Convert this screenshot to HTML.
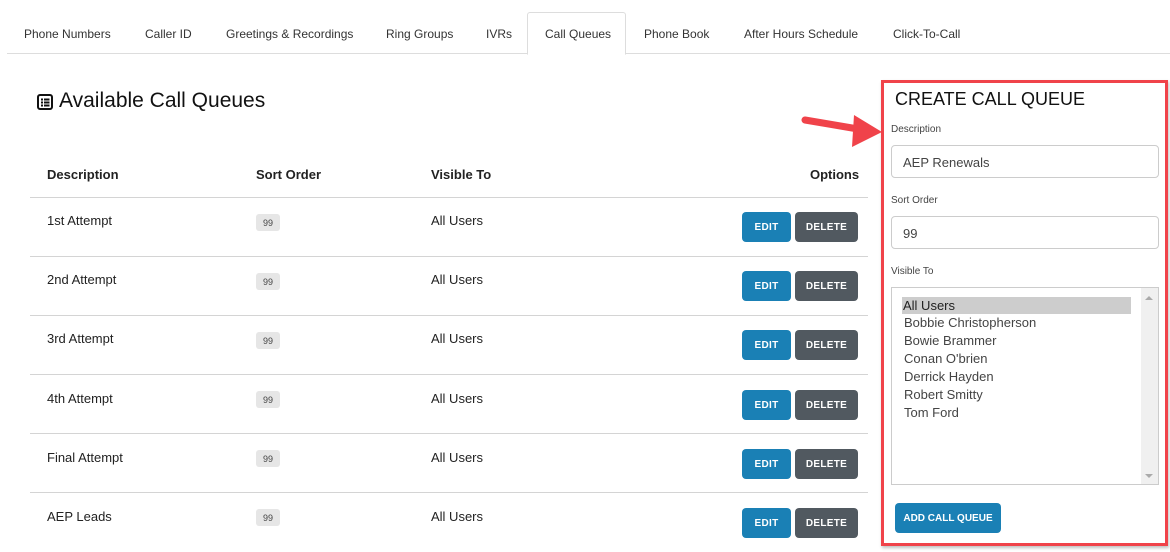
<!DOCTYPE html><html><head><style>
body{margin:0;width:1170px;height:552px;background:#fff;font-family:"Liberation Sans",sans-serif;color:#222;position:relative;overflow:hidden}
.a{position:absolute;white-space:nowrap}
.tab{position:absolute;top:27px;font-size:12px;color:#333}
.line{position:absolute;left:30px;width:838px;height:1px;background:#d4d4d4}
.cell{position:absolute;font-size:13px;color:#222}
.badge{position:absolute;left:256px;width:24px;height:17px;background:#e6e6e6;border-radius:3px;font-size:9px;color:#444;text-align:center;line-height:18px}
.edit,.del{position:absolute;height:30px;border-radius:4px;color:#fff;font-size:10px;font-weight:bold;text-align:center;line-height:31px;letter-spacing:.3px}
.edit{left:742px;width:49px;background:#1a80b5}
.del{left:795px;width:63px;background:#515960}
.lbl{position:absolute;left:891px;font-size:10px;color:#444}
.inp{position:absolute;left:891px;height:33px;border:1px solid #ccc;border-radius:4px;font-size:13px;color:#444;line-height:33px;box-sizing:border-box;padding-left:11px;width:268px}
.opt{position:absolute;left:904px;font-size:13px;color:#444}
</style></head><body>
<div class="a" style="left:7px;top:53px;width:1163px;height:1px;background:#ddd"></div>
<div class="a" style="left:527px;top:12px;width:97px;height:41px;border:1px solid #ddd;border-bottom:1px solid #fff;border-radius:3px 3px 0 0;background:#fff"></div>
<div class="tab" style="left:24px">Phone Numbers</div>
<div class="tab" style="left:145px">Caller ID</div>
<div class="tab" style="left:226px">Greetings &amp; Recordings</div>
<div class="tab" style="left:386px">Ring Groups</div>
<div class="tab" style="left:486px">IVRs</div>
<div class="tab" style="left:545px">Call Queues</div>
<div class="tab" style="left:644px">Phone Book</div>
<div class="tab" style="left:744px">After Hours Schedule</div>
<div class="tab" style="left:893px">Click-To-Call</div>
<svg class="a" style="left:37px;top:94px" width="17" height="16" viewBox="0 0 17 16"><rect x="1" y="1" width="14" height="14" rx="2" fill="none" stroke="#111" stroke-width="2"/><rect x="4" y="4.5" width="2" height="2" fill="#111"/><rect x="7" y="4.5" width="5.5" height="2" fill="#111"/><rect x="4" y="7.5" width="2" height="2" fill="#111"/><rect x="7" y="7.5" width="5.5" height="2" fill="#111"/><rect x="4" y="10.5" width="2" height="2" fill="#111"/><rect x="7" y="10.5" width="5.5" height="2" fill="#111"/></svg>
<div class="a" style="left:59px;top:89px;font-size:21px;color:#111">Available Call Queues</div>
<div class="cell" style="left:47px;top:167px;font-weight:bold">Description</div>
<div class="cell" style="left:256px;top:167px;font-weight:bold">Sort Order</div>
<div class="cell" style="left:431px;top:167px;font-weight:bold">Visible To</div>
<div class="cell" style="left:810px;top:167px;font-weight:bold">Options</div>
<div class="line" style="top:197px"></div>
<div class="cell" style="left:47px;top:213px">1st Attempt</div><div class="badge" style="top:214px">99</div><div class="cell" style="left:431px;top:213px">All Users</div><div class="edit" style="top:212px">EDIT</div><div class="del" style="top:212px">DELETE</div>
<div class="line" style="top:256px"></div>
<div class="cell" style="left:47px;top:272px">2nd Attempt</div><div class="badge" style="top:273px">99</div><div class="cell" style="left:431px;top:272px">All Users</div><div class="edit" style="top:271px">EDIT</div><div class="del" style="top:271px">DELETE</div>
<div class="line" style="top:315px"></div>
<div class="cell" style="left:47px;top:331px">3rd Attempt</div><div class="badge" style="top:332px">99</div><div class="cell" style="left:431px;top:331px">All Users</div><div class="edit" style="top:330px">EDIT</div><div class="del" style="top:330px">DELETE</div>
<div class="line" style="top:374px"></div>
<div class="cell" style="left:47px;top:391px">4th Attempt</div><div class="badge" style="top:391px">99</div><div class="cell" style="left:431px;top:391px">All Users</div><div class="edit" style="top:390px">EDIT</div><div class="del" style="top:390px">DELETE</div>
<div class="line" style="top:433px"></div>
<div class="cell" style="left:47px;top:450px">Final Attempt</div><div class="badge" style="top:450px">99</div><div class="cell" style="left:431px;top:450px">All Users</div><div class="edit" style="top:449px">EDIT</div><div class="del" style="top:449px">DELETE</div>
<div class="line" style="top:492px"></div>
<div class="cell" style="left:47px;top:509px">AEP Leads</div><div class="badge" style="top:509px">99</div><div class="cell" style="left:431px;top:509px">All Users</div><div class="edit" style="top:508px">EDIT</div><div class="del" style="top:508px">DELETE</div>
<div class="a" style="left:881px;top:80px;width:281px;height:460px;border:3px solid #f0434a;box-shadow:1px 2px 3px rgba(0,0,0,.25)"></div>
<div class="a" style="left:895px;top:89px;font-size:18px;color:#111">CREATE CALL QUEUE</div>
<svg class="a" style="left:800px;top:112px" width="85" height="40" viewBox="0 0 85 40"><path d="M5 8 L58 17" stroke="#f0434a" stroke-width="7" stroke-linecap="round"/><path d="M54 3 L82 20 L52 35 Z" fill="#f0434a"/></svg>
<div class="lbl" style="top:124px">Description</div>
<div class="inp" style="top:145px">AEP Renewals</div>
<div class="lbl" style="top:195px">Sort Order</div>
<div class="inp" style="top:216px">99</div>
<div class="lbl" style="top:266px">Visible To</div>
<div class="a" style="left:891px;top:287px;width:266px;height:196px;border:1px solid #ccc"></div>
<div class="a" style="left:1141px;top:288px;width:17px;height:196px;background:#f0f0f0"></div>
<div class="a" style="left:1145px;top:296px;width:0;height:0;border:4px solid transparent;border-bottom:4px solid #aaa;border-top:0"></div>
<div class="a" style="left:1145px;top:474px;width:0;height:0;border:4px solid transparent;border-top:4px solid #aaa;border-bottom:0"></div>
<div class="a" style="left:902px;top:297px;width:229px;height:17px;background:#cdcdcd"></div>
<div class="opt" style="top:298px;left:903px;color:#222">All Users</div>
<div class="opt" style="top:315px">Bobbie Christopherson</div>
<div class="opt" style="top:333px">Bowie Brammer</div>
<div class="opt" style="top:351px">Conan O'brien</div>
<div class="opt" style="top:369px">Derrick Hayden</div>
<div class="opt" style="top:387px">Robert Smitty</div>
<div class="opt" style="top:405px">Tom Ford</div>
<div class="a" style="left:895px;top:503px;width:106px;height:30px;background:#1a80b5;border-radius:4px;color:#fff;font-size:10px;font-weight:bold;text-align:center;line-height:31px">ADD CALL QUEUE</div>
</body></html>
